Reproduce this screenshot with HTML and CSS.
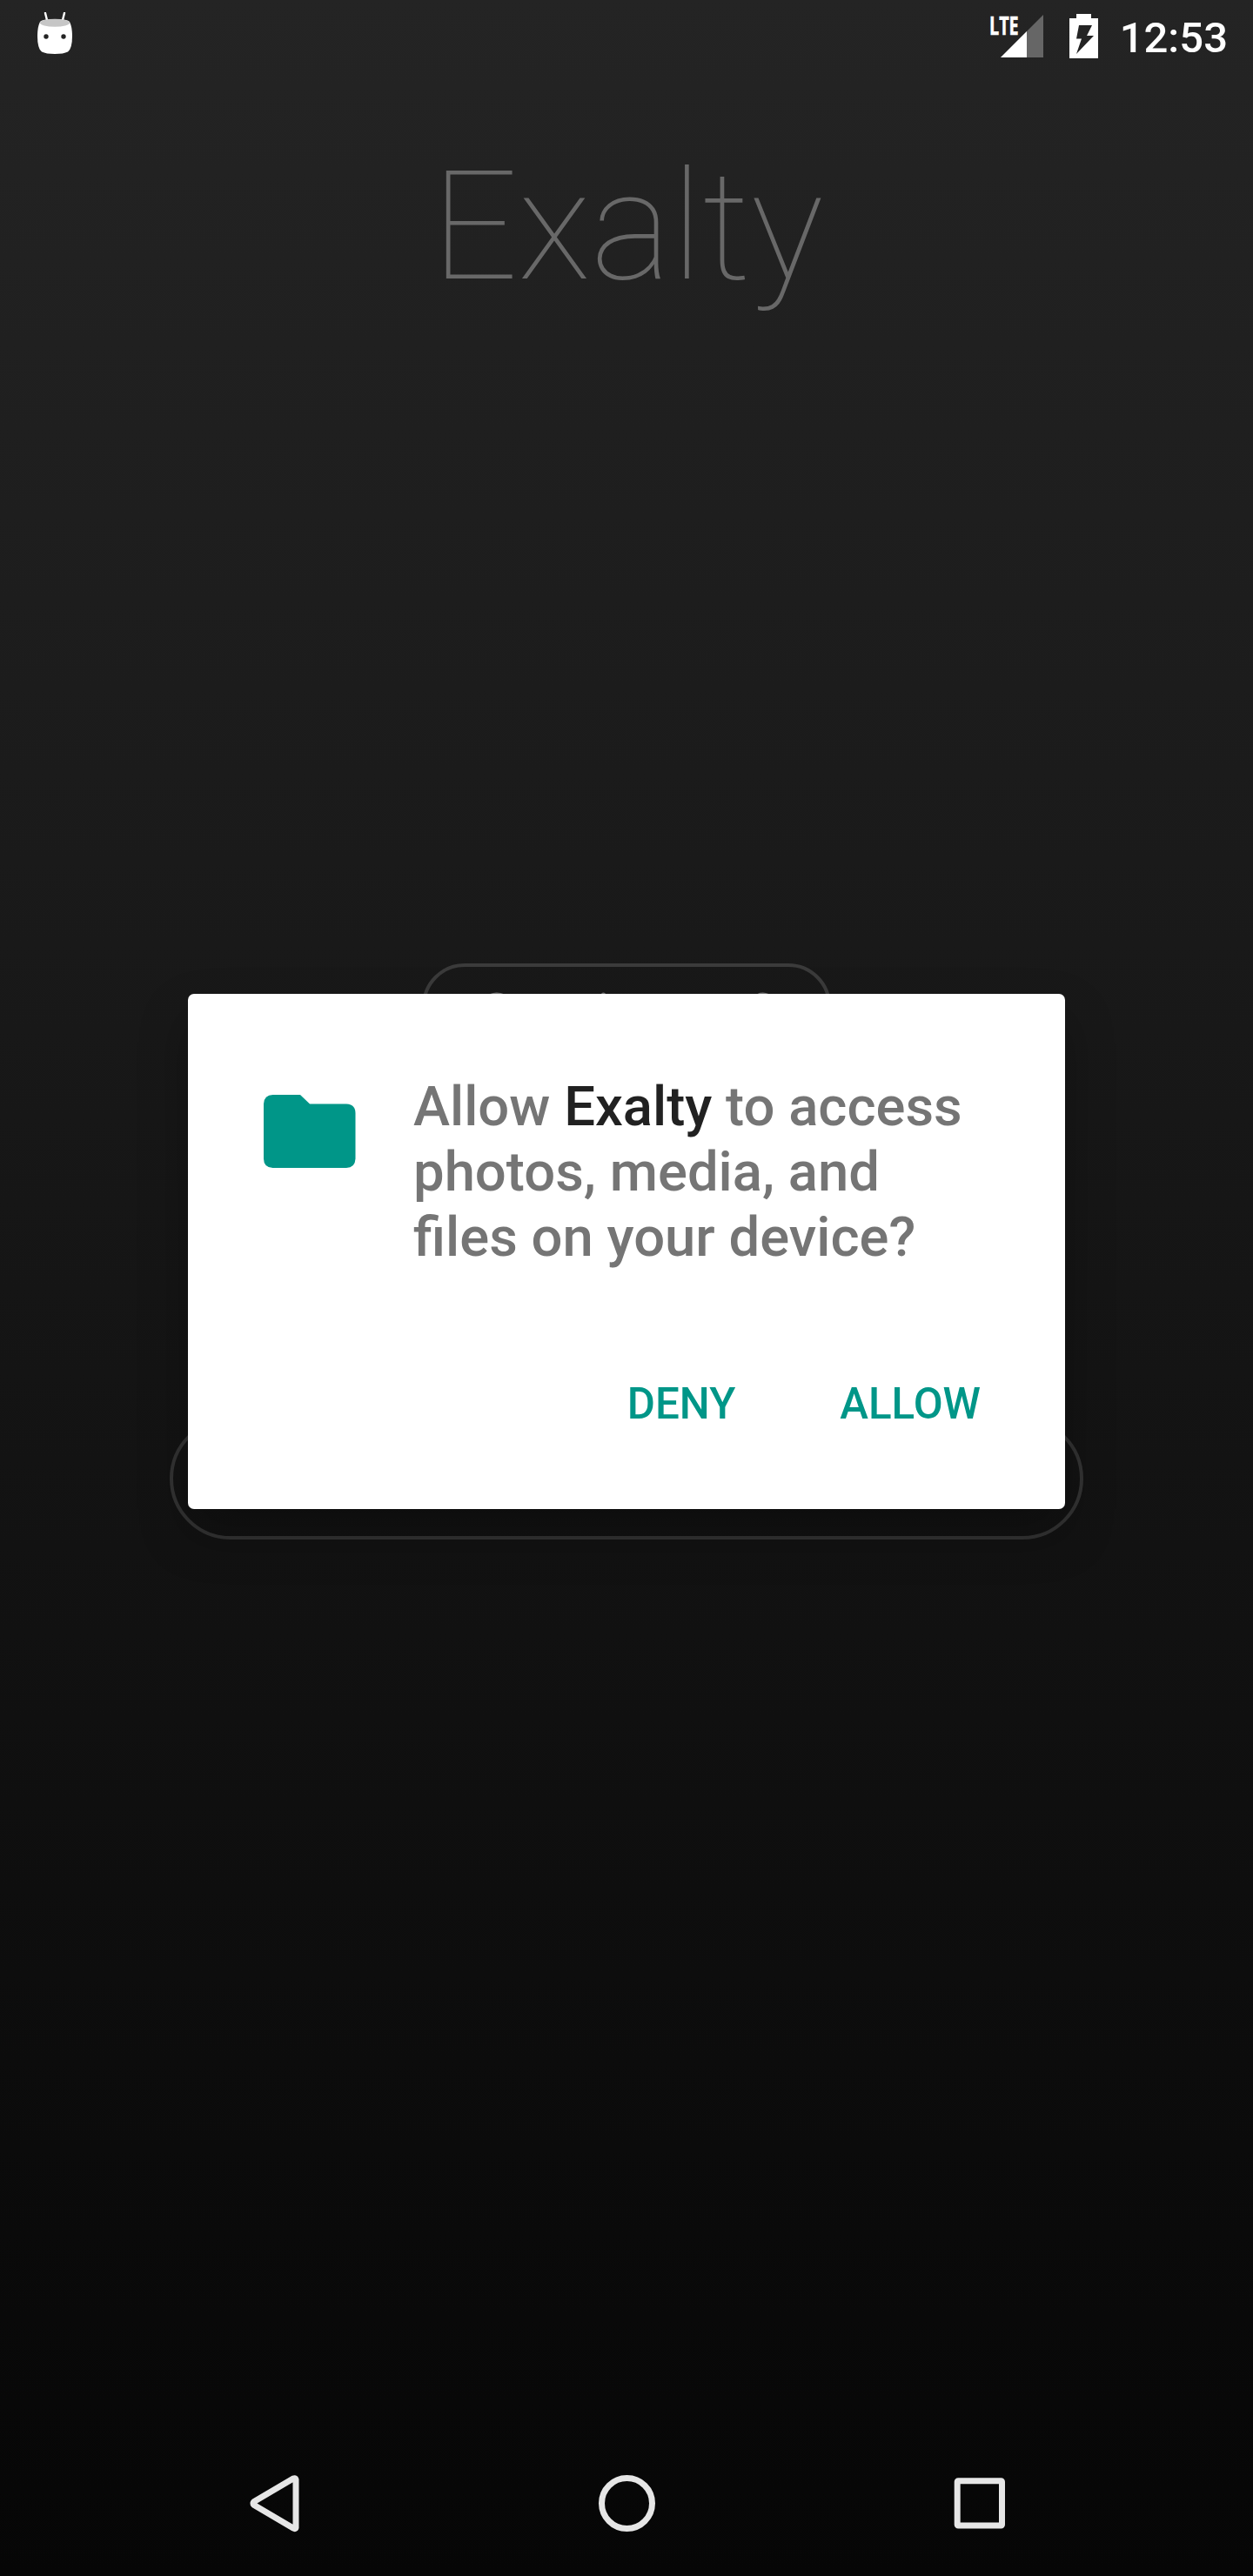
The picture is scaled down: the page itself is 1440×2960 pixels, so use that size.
FILE: index.html
```html
<!DOCTYPE html>
<html lang="en">
<head>
<meta charset="utf-8">
<title>Exalty</title>
<link rel="stylesheet" href="styles.css">
</head>
<body>
<div class="screen">
  <header class="status">
    <svg class="droid" width="40" height="50" viewBox="0 0 40 50">
      <path d="M9 1l2.500 10M31 1l-2.500 10" stroke="#fff" stroke-width="2.400" stroke-linecap="round"/>
      <path d="M3 11Q5 8 20 8T37 11Q40 17 40 27Q40 42 35 45.500Q30 48 20 48T5 45.500Q0 42 0 27Q0 17 3 11Z" fill="#fff"/>
      <ellipse cx="20" cy="12.300" rx="17" ry="4.500" fill="#c6c6c6"/>
      <circle cx="10" cy="28" r="2.700" fill="#232323"/><circle cx="30" cy="28" r="2.700" fill="#232323"/>
    </svg>
    <div class="status-right">
      <div class="signal">
        <svg width="49" height="49" viewBox="0 0 49 49"><path d="M49 0V49H0Z" fill="#666"/><path d="M30 19V49H0Z" fill="#fff"/></svg>
        <span class="lte">LTE</span>
      </div>
      <svg class="battery" width="33" height="51" viewBox="0 0 33 51"><path fill-rule="evenodd" fill="#fff" d="M8 0H25V5H33V51H0V5H8ZM11 13L8 28.500H14L8 46L28 25H20L26 13Z"/></svg>
      <time class="clock">12:53</time>
    </div>
  </header>
  <main class="app">
    <h1 class="brand">Exalty</h1>
    <div class="pill pill-small"><span>Continue</span><span>?</span></div>
    <div class="pill pill-large"></div>
  </main>
  <nav class="nav">
    <svg width="70" height="70" viewBox="0 0 70 70"><path d="M60 8V63.500Q59.500 65.500 57 64L12 37.500Q10 35.500 12 33.500L57 7Q59.500 6 60 8Z"/></svg>
    <svg width="70" height="70" viewBox="0 0 70 70"><circle cx="35.500" cy="35.500" r="29"/></svg>
    <svg width="70" height="70" viewBox="0 0 70 70"><rect x="10.200" y="9.800" width="51.300" height="51.300" rx="1"/></svg>
  </nav>
  <section class="dialog" role="dialog">
    <div class="message">
      <svg class="folder" width="106" height="84" viewBox="0 0 106 84"><path fill="#009688" d="M10.500 0H42L53 10.500H95Q105.500 11 105.500 21V73.500Q105 84 95 84H10.500Q0 83.500 0 73.500V10.500Q.5 0 10.500 0Z"/></svg>
      <p>Allow <b>Exalty</b> to access<br>photos, media, and<br>files on your device?</p>
    </div>
    <div class="actions"><button>DENY</button><button>ALLOW</button></div>
  </section>
</div>
</body>
</html>
```
FILE: styles.css
```css
* { box-sizing: border-box; }
body { margin: 0; font-family: Roboto, sans-serif; }
.screen { position: relative; width: 1440px; height: 2960px; overflow: hidden; display: flex; flex-direction: column; background: linear-gradient(#242424, #060606); }
.status { height: 84px; flex: none; display: flex; justify-content: space-between; padding: 14px 29px 0 43px; }
.status-right { display: flex; }
.signal { position: relative; height: 49px; margin: 3px 30px 0 0; }
.signal svg, .battery, .droid { display: block; }
.battery { margin: 2px 25px 0 0; }
.lte { position: absolute; left: -13px; top: 0; font: 700 29px/24px "Open Sans", sans-serif; color: #fff; transform: scaleX(.68); transform-origin: 0 0; -webkit-text-stroke: .6px #fff; }
.clock { color: #fff; font-weight: 500; font-size: 49px; line-height: 58px; margin-top: 1px; }
.app { flex: 1; display: flex; flex-direction: column; align-items: center; }
.brand { margin: 74px 0 0 2px; height: 205px; font-size: 175px; line-height: 206px; font-weight: 100; color: #686868; }
.pill { border: 4px solid #3b3b3b; }
.pill-small { margin-top: 744px; width: 470px; height: 104px; border-radius: 49px; display: flex; justify-content: center; gap: 54px; padding-top: 17px; color: #777; font-size: 66px; font-weight: 300; line-height: 77px; }
.pill-large { margin-top: 418px; width: 1050px; height: 140px; border-radius: 70px; border-color: #333; }
.nav { height: 168px; flex: none; display: flex; justify-content: center; align-items: center; gap: 335px; }
.nav svg { fill: none; stroke: #e6e6e6; stroke-width: 7; stroke-linejoin: round; }
.dialog { position: absolute; left: 216px; top: 1142px; width: 1008px; height: 592px; background: #fff; border-radius: 7px; box-shadow: 0 28px 56px rgba(0,0,0,.28); padding: 92px 84px 0 87px; }
.message { display: flex; align-items: flex-start; gap: 66px; }
.folder { margin-top: 24px; flex: none; }
.message p { margin: 0; font-size: 63.4px; line-height: 75px; font-weight: 500; color: #757575; white-space: nowrap; }
.message b { font-weight: 500; color: #212121; }
.actions { display: flex; justify-content: flex-end; gap: 120px; margin-top: 125px; padding-right: 13px; }
.actions button { border: 0; padding: 0; background: none; font: 500 49.3px/58px Roboto, sans-serif; color: #009688; }
```
